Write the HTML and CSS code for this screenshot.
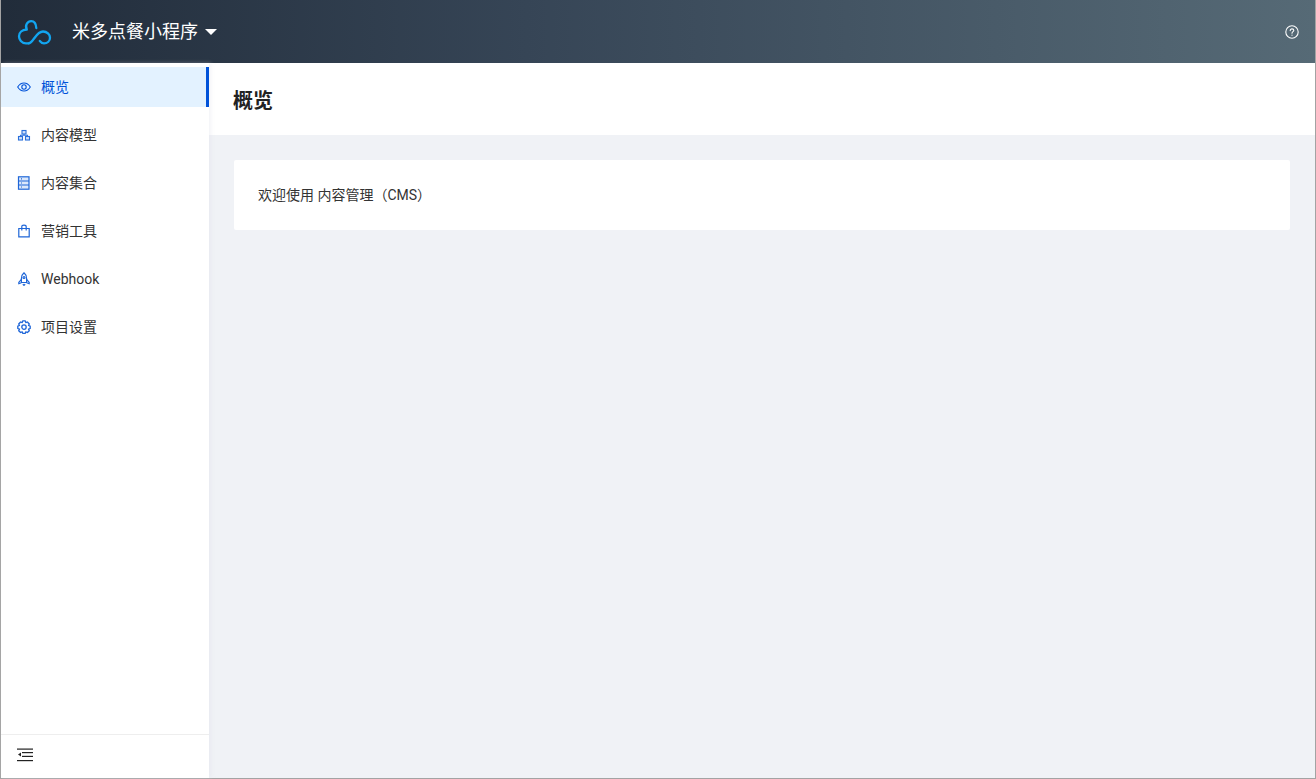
FILE: index.html
```html
<!DOCTYPE html>
<html lang="zh-CN">
<head>
<meta charset="utf-8">
<title>内容管理</title>
<link rel="stylesheet" href="styles.css">
</head>
<body>
<div class="frame">
  <header class="topbar">
    <svg class="logo" viewBox="17 18.500 36 26" width="36" height="26" fill="none" stroke="#12a5f0" stroke-width="2.300" stroke-linecap="round" stroke-linejoin="round">
      <path d="M28.700 42.800H26C21.500 42.800 19 39 19 35.700C19 32 22 29.300 26.800 29C24.500 24.500 27.800 20.700 31.200 20.700C34.500 20.700 36 23 36.300 27.500"/>
      <path d="M28.700 42.800C33 42.800 36 31 43 31C47 31 50 34 50 37.200C50 40.500 47.500 42.800 44 42.800C42.300 42.800 41 42 39.800 40.500"/>
    </svg>
    <div class="project">米多点餐小程序</div>
    <span class="caret"></span>
    <svg class="help" viewBox="0 0 14 14" width="14" height="14" fill="none" stroke="#fff" stroke-width="1.100" stroke-linecap="round">
      <circle cx="7" cy="7" r="6.200"/>
      <path d="M5.200 5.600C5.200 4.500 6 3.900 7 3.900C8 3.900 8.800 4.500 8.800 5.400C8.800 6.600 7 6.700 7 8.200"/>
      <path d="M7 10.100V10.200"/>
    </svg>
  </header>
  <div class="main">
    <aside class="sidebar">
      <nav class="menu">
        <a class="item active">
          <svg class="icon" viewBox="0 0 14 14" fill="none" stroke="#0052d9" stroke-width="1.100"><path d="M.7 7C2.200 4.500 4.400 3 7 3C9.600 3 11.800 4.500 13.300 7C11.800 9.500 9.600 11 7 11C4.400 11 2.200 9.500 .7 7Z"/><circle cx="7" cy="7" r="2.200"/></svg>
          <span>概览</span>
        </a>
        <a class="item">
          <svg class="icon" viewBox="0 0 14 14" fill="#cfe0fa" stroke="#2a6fdb" stroke-width="1.100"><rect x="5" y="2.500" width="4" height="3.500"/><rect x="1.500" y="8.500" width="4" height="3.500"/><rect x="8.500" y="8.500" width="4" height="3.500"/><path fill="none" d="M3.500 8.500V7.200H10.500V8.500M7 6V7.200"/></svg>
          <span>内容模型</span>
        </a>
        <a class="item">
          <svg class="icon" viewBox="0 0 14 14" fill="#dbe8fb" stroke="#1f66d8" stroke-width="1.200"><rect x="1.500" y=".8" width="10.500" height="12.400"/><path fill="none" stroke-width="1" d="M1.500 5H12M1.500 9H12"/><path fill="none" stroke-width="1.200" d="M4 2.900H5M4 7H5M4 11H5"/></svg>
          <span>内容集合</span>
        </a>
        <a class="item">
          <svg class="icon" viewBox="0 0 14 14" fill="none" stroke="#1f66d8" stroke-width="1.200"><path d="M1.800 4.500H12.200V12.800H1.800Z"/><path d="M4.800 6.500V2.800C4.800 1.800 5.500 1.200 7 1.200C8.500 1.200 9.200 1.800 9.200 2.800V6.500"/></svg>
          <span>营销工具</span>
        </a>
        <a class="item">
          <svg class="icon" viewBox="0 0 14 14" fill="none" stroke="#1f66d8" stroke-width="1.200" stroke-linejoin="round"><path d="M7 .8C8.800 2.300 9.600 4.300 9.600 6.500V10.500H4.400V6.500C4.400 4.300 5.200 2.300 7 .8Z"/><circle cx="7" cy="5.500" r="1"/><path d="M4.400 7.300L1.800 10.300V11.800L4.400 10.800M9.600 7.300L12.200 10.300V11.800L9.600 10.800M5.800 12.200L7 13.300L8.200 12.200"/></svg>
          <span>Webhook</span>
        </a>
        <a class="item">
          <svg class="icon" viewBox="0 0 14 14" fill="none" stroke="#1f66d8" stroke-width="1.300" stroke-linejoin="round"><path d="M5.700 .9H8.300L8.800 2.600L10.400 2L12.300 4L11.500 5.500L13.200 6.100V8.500L11.500 9.100L12.300 10.700L10.400 12.500L8.800 11.800L8.300 13.300H5.700L5.200 11.800L3.600 12.500L1.700 10.700L2.500 9.100L.8 8.500V6.100L2.500 5.500L1.700 4L3.600 2L5.200 2.600Z"/><circle cx="7" cy="7.100" r="2.200"/></svg>
          <span>项目设置</span>
        </a>
      </nav>
      <footer class="side-foot">
        <svg class="collapse" viewBox="0 0 16 14" width="16" height="14" fill="#222">
          <rect x="0" y="0.500" width="16" height="1.200"/>
          <rect x="5" y="4" width="11" height="1.200"/>
          <rect x="5" y="7.800" width="11" height="1.200"/>
          <rect x="0" y="12" width="16" height="1.200"/>
          <path d="M1 6.500L4 4.500V8.500Z"/>
        </svg>
      </footer>
    </aside>
    <main class="content">
      <div class="page-head"><h1>概览</h1></div>
      <section class="card">欢迎使用 内容管理（CMS）</section>
    </main>
  </div>
</div>
</body>
</html>
```
FILE: styles.css
```css
* { box-sizing: border-box; }
html, body { margin: 0; height: 100%; }
body {
  font-family: Roboto, "Noto Sans CJK SC", "Noto Sans", sans-serif;
  font-size: 14px;
  color: #333;
  overflow: hidden;
}
.frame {
  width: 1316px;
  height: 779px;
  border: solid #a3a3a3;
  border-width: 0 1px 1px 1px;
  display: flex;
  flex-direction: column;
}
.topbar {
  height: 63px;
  flex: none;
  display: flex;
  align-items: center;
  padding: 0 16px;
  background: linear-gradient(90deg, #212c3a 0%, #364556 40%, #566a76 100%);
  color: #fff;
}
.logo { flex: none; margin-right: 19px; }
.project { font-size: 18px; line-height: 24px; }
.caret {
  margin-left: 7px;
  width: 0;
  height: 0;
  border-left: 6px solid transparent;
  border-right: 6px solid transparent;
  border-top: 6px solid #fff;
}
.help { margin-left: auto; }
.main { flex: 1; display: flex; min-height: 0; }
.sidebar {
  width: 208px;
  flex: none;
  background: #fff;
  display: flex;
  flex-direction: column;
  padding-top: 4px;
  position: relative;
  z-index: 1;
  box-shadow: 2px 0 4px rgba(220, 224, 232, .35);
}
.menu { flex: 1; display: flex; flex-direction: column; gap: 8px; }
.item {
  height: 40px;
  display: flex;
  align-items: center;
  padding-left: 16px;
  color: #333;
}
.item span { line-height: 20px; }
.icon { width: 14px; height: 14px; flex: none; margin-right: 10px; }
.item.active {
  background: #e3f2ff;
  color: #0052d9;
  border-right: 3px solid #0052d9;
}
.side-foot {
  height: 44px;
  flex: none;
  border-top: 1px solid #eeeeee;
  display: flex;
  align-items: center;
  padding: 0 0 4px 16px;
}
.content { flex: 1; background: #f0f2f6; min-width: 0; }
.page-head {
  height: 72px;
  background: #fff;
  display: flex;
  align-items: center;
  padding: 4px 0 0 24px;
}
.page-head h1 { margin: 0; font-size: 20px; line-height: 28px; font-weight: 700; color: #222; }
.card {
  margin: 25px 25px 0;
  height: 70px;
  background: #fff;
  border-radius: 2px;
  padding: 0 24px 2px;
  display: flex;
  align-items: center;
  color: #333;
}
```
